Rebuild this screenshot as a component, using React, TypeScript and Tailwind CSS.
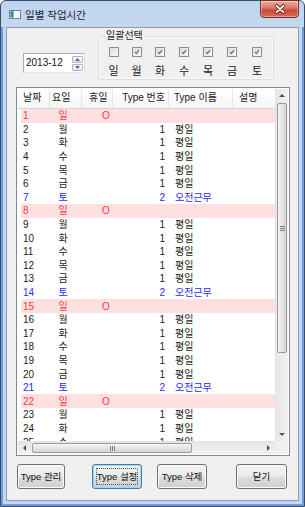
import React from "react";

const days = ["일", "월", "화", "수", "목", "금", "토"];

function CheckBox({ checked }: { checked: boolean }) {
  return (
    <div className="w-[10px] h-[10px] border border-[#8e8f8f] bg-[linear-gradient(135deg,#dcdcdc,#fafafa)] p-px flex">
      {checked && (
        <svg viewBox="0 0 8 8" className="w-full h-full">
          <path d="M1.4 4.1 L3.2 6 L6.6 1.6" stroke="#3d5b94" strokeWidth="1.5" fill="none" />
        </svg>
      )}
    </div>
  );
}

function Row({ d }: { d: number }) {
  const w = days[(d - 1) % 7];
  const sun = w === "일";
  const sat = w === "토";
  const cls = sun
    ? "bg-[#ffe0e0] text-[#ff3a3a]"
    : sat
    ? "text-[#2a2af0]"
    : "text-[#1c1c1c]";
  return (
    <div className={`flex h-[13.6px] items-center leading-[13px] whitespace-nowrap ${cls}`}>
      <div className="w-[29px] pl-[2px]">{d}</div>
      <div className="w-[26px] text-center">{w}</div>
      <div className="w-[37px] pl-[26px]">{sun ? "O" : ""}</div>
      <div className="w-[56px] pr-[4px] text-right">{sun ? "" : sat ? "2" : "1"}</div>
      <div className="w-[64px] pl-[6px]">{sun ? "" : sat ? "오전근무" : "평일"}</div>
      <div className="flex-1" />
    </div>
  );
}

function Btn({ label, focus, w }: { label: string; focus?: boolean; w: string }) {
  return (
    <div
      className={`relative h-[25px] ${w} rounded-[3px] border flex items-center justify-center text-[9.5px] leading-[12px] whitespace-nowrap text-[#111] bg-[linear-gradient(to_bottom,#f3f3f3,#ebebeb_48%,#dddddd_52%,#cfcfcf)] ${
        focus
          ? "border-[#3c7fb1] shadow-[inset_0_0_0_1px_#a6d3f2]"
          : "border-[#707070] shadow-[inset_0_0_0_1px_#fbfbfb]"
      }`}
    >
      {focus && <div className="absolute inset-[3px] border border-dotted border-[#555]" />}
      <span className="relative">{label}</span>
    </div>
  );
}

function Arrow({ dir }: { dir: "up" | "down" | "left" | "right" }) {
  const d =
    dir === "up"
      ? "M0 4 L3 1 L6 4 Z"
      : dir === "down"
      ? "M0 1 L3 4 L6 1 Z"
      : dir === "left"
      ? "M4 0 L1 3 L4 6 Z"
      : "M1 0 L4 3 L1 6 Z";
  const vert = dir === "up" || dir === "down";
  return (
    <svg width={vert ? 6 : 5} height={vert ? 5 : 6} viewBox={vert ? "0 0 6 5" : "0 0 5 6"}>
      <path d={d} fill="#505050" />
    </svg>
  );
}

export default function App() {
  const rows = Array.from({ length: 25 }, (_, i) => i + 1);
  return (
    <div className="w-[305px] h-[507px] font-['Liberation_Sans','Noto_Sans_CJK_KR',sans-serif]">
      <div className="w-full h-full border border-[#3a4b66] rounded-t-[6px] bg-[linear-gradient(to_bottom,#bfd4ef,#c6d9f0_30px,#c4d7ef)] flex flex-col">
        {/* title bar */}
        <div className="relative h-[26px] flex items-center shrink-0">
          <svg width="12" height="9" viewBox="0 0 12 9" className="ml-[8px] mt-[1px]">
            <rect x="0.5" y="0.5" width="11" height="8" fill="#f4f7fb" stroke="#6d7f97" />
            <rect x="1.5" y="1.5" width="3" height="6" fill="#2f8f6a" />
            <rect x="1.5" y="1.5" width="3" height="2" fill="#4a7fd0" />
          </svg>
          <span className="ml-[4px] mt-[1px] text-[10.5px] text-[#1a2636] leading-[14px]">일별 작업시간</span>
          <div className="absolute left-[259px] top-[-1px] w-[39px] h-[18px] rounded-b-[4px] border border-[#7a3026] bg-[linear-gradient(to_bottom,#eab0a2,#db7462_45%,#c84836_55%,#d56a55)] shadow-[inset_0_0_0_1px_rgba(255,255,255,0.35)] flex items-center justify-center">
            <svg width="12" height="10" viewBox="0 0 12 10">
              <path d="M2.5 1.8 L9.5 8.2 M9.5 1.8 L2.5 8.2" stroke="#5a2218" strokeWidth="3.2" strokeLinecap="round" />
              <path d="M2.5 1.8 L9.5 8.2 M9.5 1.8 L2.5 8.2" stroke="#ffffff" strokeWidth="1.8" strokeLinecap="round" />
            </svg>
          </div>
        </div>
        {/* body frame */}
        <div className="flex-1 min-h-0 border-x-2 border-b-2 border-[#6f9ce0] px-[3px] pb-[3px] flex">
          <div className="flex-1 border border-[#8c9db5] bg-[#f0f0f0] pl-[9px] pr-[8px] flex flex-col text-[10px]">
            {/* top controls */}
            <div className="flex items-start h-[52px]">
              <div className="ml-[7px] mt-[25px] w-[62px] h-[20px] border border-[#abadb3] border-r-[#dbdfe6] border-b-[#e3e9ef] bg-white flex items-center">
                <span className="ml-[2px] text-[10px] text-[#111] leading-[12px]">2013-12</span>
                <div className="ml-auto mr-[1px] w-[11px] h-[15px] flex flex-col gap-px">
                  <div className="flex-1 border border-[#aeb6c2] rounded-[1px] bg-[linear-gradient(to_bottom,#fbfbfb,#e4e8ee)] flex items-center justify-center">
                    <svg width="5" height="3" viewBox="0 0 5 3"><path d="M0 3 L2.5 0 L5 3 Z" fill="#4b6a99" /></svg>
                  </div>
                  <div className="flex-1 border border-[#aeb6c2] rounded-[1px] bg-[linear-gradient(to_bottom,#fbfbfb,#e4e8ee)] flex items-center justify-center">
                    <svg width="5" height="3" viewBox="0 0 5 3"><path d="M0 0 L2.5 3 L5 0 Z" fill="#4b6a99" /></svg>
                  </div>
                </div>
              </div>
              <div className="relative ml-[13px] mt-[8px] w-[176px] h-[44px] border border-[#d5dfe5] rounded-[3px] shadow-[inset_0_0_0_1px_#fafcfd]">
                <span className="absolute left-[6px] top-[-8px] px-px bg-[#f0f0f0] text-[10px] leading-[13px] text-[#1a1a1a]">일괄선택</span>
                <div className="ml-[3px] mt-[10px] grid grid-cols-[23px_23px_24px_24px_24px_24px_26px] justify-items-center">
                  {days.map((d, i) => (
                    <CheckBox key={d} checked={i !== 0} />
                  ))}
                  {days.map((d) => (
                    <span key={"l" + d} className="mt-[7px] text-[11px] leading-[14px] text-[#1a1a1a]">{d}</span>
                  ))}
                </div>
              </div>
            </div>
            {/* list */}
            <div className="mt-[7px] w-[274px] h-[369px] border border-[#828790] bg-white p-px flex flex-col">
              <div className="flex flex-1 min-h-0">
                <div className="flex-1 min-w-0 flex flex-col overflow-hidden">
                  <div className="flex h-[20px] shrink-0 whitespace-nowrap bg-[linear-gradient(to_bottom,#ffffff,#f5f6f8)] border-b border-[#d5d5d5] text-[10px] text-[#202020] leading-[18px]">
                    <div className="w-[32px] pl-[5px] border-r border-[#e3e7ec]">날짜</div>
                    <div className="w-[32px] pl-[2px] border-r border-[#e3e7ec]">요일</div>
                    <div className="w-[31px] pl-[7px] border-r border-[#e3e7ec]">휴일</div>
                    <div className="w-[56px] pr-[3px] text-right border-r border-[#e3e7ec]">Type 번호</div>
                    <div className="w-[64px] pl-[5px] border-r border-[#e3e7ec]">Type 이름</div>
                    <div className="flex-1 pl-[6px]">설명</div>
                  </div>
                  <div className="flex-1 min-h-0 overflow-hidden ml-[3px]">
                    {rows.map((d) => (
                      <Row key={d} d={d} />
                    ))}
                  </div>
                </div>
                {/* vertical scrollbar */}
                <div className="w-[13px] flex flex-col bg-[linear-gradient(to_right,#e6e6e6,#f1f1f1)] border-l border-[#e4e4e4]">
                  <div className="h-[13px] shrink-0 flex items-center justify-center">
                    <Arrow dir="up" />
                  </div>
                  <div className="mt-px mx-px h-[250px] shrink-0 rounded-[2px] border border-[#9c9c9c] bg-[linear-gradient(to_right,#f5f5f5,#e4e4e4_50%,#d6d6d6)] flex flex-col items-center justify-center gap-[1px]">
                    <div className="w-[5px] h-px bg-[#7a7a7a]" />
                    <div className="w-[5px] h-px bg-[#7a7a7a]" />
                    <div className="w-[5px] h-px bg-[#7a7a7a]" />
                  </div>
                  <div className="flex-1" />
                  <div className="h-[13px] shrink-0 flex items-center justify-center">
                    <Arrow dir="down" />
                  </div>
                </div>
              </div>
              {/* horizontal scrollbar */}
              <div className="flex h-[13px] shrink-0">
                <div className="flex-1 flex items-stretch bg-[linear-gradient(to_bottom,#e6e6e6,#f1f1f1)] border-t border-[#e4e4e4]">
                  <div className="w-[13px] flex items-center justify-center">
                    <Arrow dir="left" />
                  </div>
                  <div className="ml-px my-px w-[160px] rounded-[2px] border border-[#9c9c9c] bg-[linear-gradient(to_bottom,#f5f5f5,#e4e4e4_50%,#d6d6d6)] flex items-center justify-center gap-[1px]">
                    <div className="w-px h-[5px] bg-[#7a7a7a]" />
                    <div className="w-px h-[5px] bg-[#7a7a7a]" />
                    <div className="w-px h-[5px] bg-[#7a7a7a]" />
                  </div>
                  <div className="flex-1" />
                  <div className="w-[13px] flex items-center justify-center">
                    <Arrow dir="right" />
                  </div>
                </div>
                <div className="w-[13px] bg-[#f0f0f0]" />
              </div>
            </div>
            {/* buttons */}
            <div className="mt-[8px] flex">
              <div className="ml-px">
                <Btn label="Type 관리" w="w-[48px]" />
              </div>
              <div className="ml-[27px]">
                <Btn label="Type 설정" w="w-[50px]" focus />
              </div>
              <div className="ml-[15px]">
                <Btn label="Type 삭제" w="w-[50px]" />
              </div>
              <div className="ml-[29px]">
                <Btn label="닫기" w="w-[51px]" />
              </div>
            </div>
          </div>
        </div>
      </div>
    </div>
  );
}
